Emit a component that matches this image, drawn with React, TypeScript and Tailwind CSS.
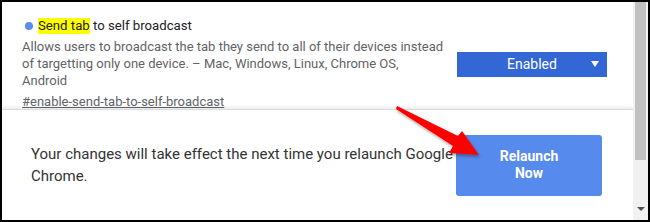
import React from "react";

export default function App() {
  return (
    <div className="relative w-[650px] h-[222px] bg-white" style={{ fontFamily: "Roboto, 'Liberation Sans', sans-serif" }}>
      <div className="w-[650px] h-[222px] border-2 border-black flex overflow-hidden">
        <div className="flex-1 flex flex-col min-w-0">
          {/* top section */}
          <div className="h-[107px] flex items-start pl-[20px] pt-[14px] overflow-hidden">
            <div className="w-[432px] shrink-0">
              <div className="flex items-center h-[20px] text-[13.2px] text-[#202124]">
                <span className="ml-[3px] mr-[5px] w-[8px] h-[8px] rounded-full bg-[#5b8def] inline-block" />
                <span className="bg-[#ffff00] leading-[16px]">Send tab</span>
                <span>&nbsp;to self broadcast</span>
              </div>
              <div className="mt-[2px] text-[13px] leading-[17px] text-[#5f6368]">
                Allows users to broadcast the tab they send to all of their devices instead of targetting only one device. – Mac, Windows, Linux, Chrome OS,
                <br />
                Android
              </div>
              <div className="mt-[4px] text-[13px] leading-[17px] text-[#5f6368] underline">
                #enable-send-tab-to-self-broadcast
              </div>
            </div>
            <div className="ml-[3px] mt-[36px] w-[150px] h-[25px] bg-[#3367d6] text-white text-[14px] flex items-center relative">
              <span className="flex-1 text-center">Enabled</span>
              <span className="absolute right-[8px] top-[9px] w-0 h-0 border-l-[4px] border-r-[4px] border-t-[6px] border-l-transparent border-r-transparent border-t-white" />
            </div>
          </div>
          {/* bottom section */}
          <div className="flex-1 border-t border-[#dadada] shadow-[0_-2px_3px_rgba(0,0,0,0.08)] flex items-center pl-[29px] pr-[29px]">
            <div className="w-[425px] shrink-0 text-[15px] leading-[22px] text-[#333333]">
              Your changes will take effect the next time you relaunch Google Chrome.
            </div>
            <div className="w-[146px] h-[61px] rounded-[3px] bg-[#568aec] text-white text-[14px] font-bold leading-[17px] flex items-center justify-center text-center">
              Relaunch
              <br />
              Now
            </div>
          </div>
        </div>
        {/* scrollbar */}
        <div className="w-[15px] bg-[#f1f1f1] flex flex-col relative">
          <div className="mx-[2px] h-[158px] bg-[#c1c1c1]" />
          <span className="absolute left-[4px] bottom-[9px] w-0 h-0 border-l-[4px] border-r-[4px] border-t-[4px] border-l-transparent border-r-transparent border-t-[#505050]" />
        </div>
      </div>
      <svg className="absolute left-0 top-0 pointer-events-none" width="650" height="222" viewBox="0 0 650 222">
        <defs>
          <filter id="sh" x="-20%" y="-20%" width="140%" height="140%">
            <feDropShadow dx="1" dy="2" stdDeviation="1.5" floodColor="#000" floodOpacity="0.35" />
          </filter>
        </defs>
        <polygon
          points="397,106 458,136 462,131 479,155 449,153 453,146 396,109"
          fill="#ff0000"
          filter="url(#sh)"
        />
      </svg>
    </div>
  );
}
